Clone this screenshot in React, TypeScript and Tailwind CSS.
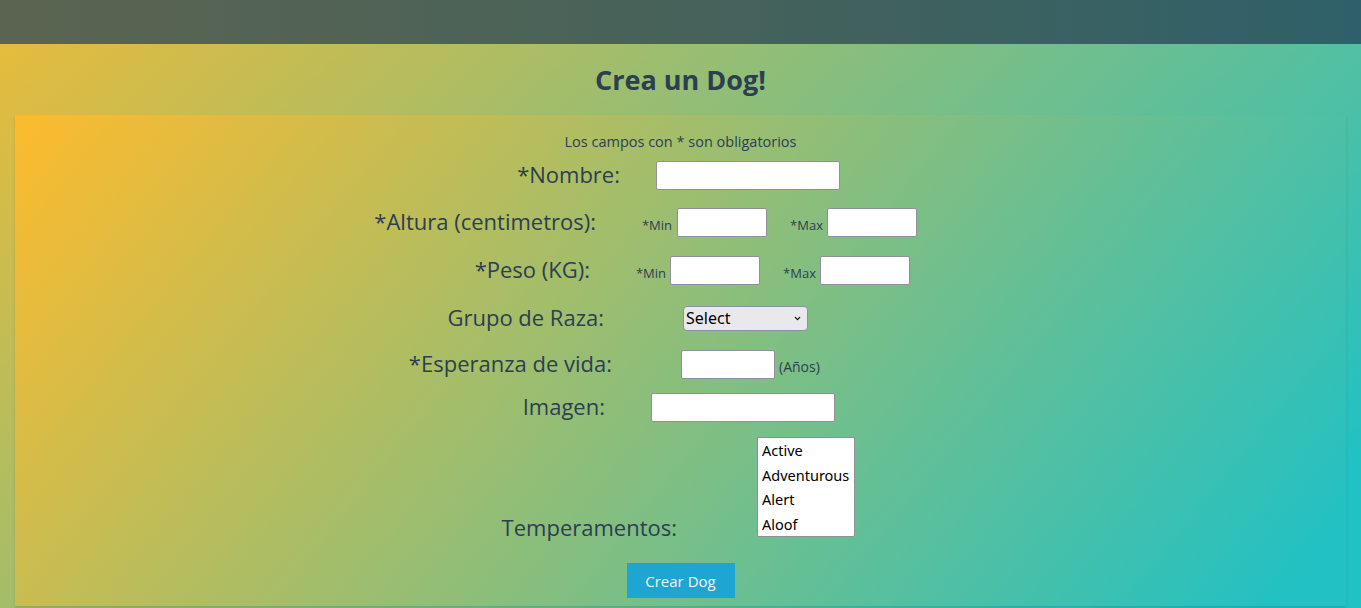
import { ChevronDown } from 'lucide-react';

const temperaments = ['Active', 'Adventurous', 'Alert', 'Aloof'];

const labelCls = 'shrink-0 text-right text-[22px] leading-[30px] pb-[4px] text-[#2c3e50]';
const smallCls = 'shrink-0 text-right text-[13px] leading-[18px] text-[#2c3e50] pt-[4px]';
const inputCls = 'h-[29px] bg-white border border-[#8f8f9d] rounded-[2px] px-1 text-[15px] text-black outline-none';

export default function App() {
  return (
    <div className="min-h-[640px] bg-[linear-gradient(137.5deg,#ebbb39_0%,#22c1c3_90%)] font-['Open_Sans',sans-serif]">
      {/* Navbar */}
      <nav className="h-[44px] bg-[linear-gradient(90deg,#5b6450_0%,#47625a_50%,#2f6069_100%)]"></nav>

      <div className="h-[71px] flex items-center justify-center">
        <h1 className="text-[27px] font-bold text-[#2c3e50] leading-[36px]">Crea un Dog!</h1>
      </div>

      <form
        className="mx-[15px] h-[491px] pt-[18px] flex flex-col bg-[linear-gradient(129deg,#fdbb2d_0%,#22c1c3_96%)] shadow-[0_2px_3px_rgba(0,0,0,0.12)]"
        onSubmit={(e) => e.preventDefault()}
      >
        <p className="h-[18px] leading-[18px] text-center text-[14.5px] text-[#2c3e50]">
          Los campos con * son obligatorios
        </p>

        {/* Nombre */}
        <div className="mt-[10px] flex items-center h-[29px]">
          <label className={`${labelCls} w-[605px]`}>*Nombre:</label>
          <input className={`${inputCls} ml-[36px] w-[184px]`} />
        </div>

        {/* Altura */}
        <div className="mt-[18px] flex items-center h-[29px]">
          <label className={`${labelCls} w-[581px]`}>*Altura (centimetros):</label>
          <span className={`${smallCls} w-[76px]`}>*Min</span>
          <input className={`${inputCls} ml-[5px] w-[90px]`} />
          <span className={`${smallCls} w-[56px]`}>*Max</span>
          <input className={`${inputCls} ml-[4px] w-[90px]`} />
        </div>

        {/* Peso */}
        <div className="mt-[19px] flex items-center h-[29px]">
          <label className={`${labelCls} w-[575px]`}>*Peso (KG):</label>
          <span className={`${smallCls} w-[76px]`}>*Min</span>
          <input className={`${inputCls} ml-[4px] w-[90px]`} />
          <span className={`${smallCls} w-[56px]`}>*Max</span>
          <input className={`${inputCls} ml-[4px] w-[90px]`} />
        </div>

        {/* Grupo de raza */}
        <div className="mt-[21px] flex items-center h-[25px]">
          <label className={`${labelCls} w-[589px]`}>Grupo de Raza:</label>
          <div className="relative ml-[79px]">
            <select className="appearance-none w-[125px] h-[25px] bg-[#e9e9ed] border border-[#8f8f9d] rounded-[4px] pl-[2px] text-[16px] leading-[23px] text-black font-['Noto_Sans',sans-serif] outline-none">
              <option>Select</option>
            </select>
            <ChevronDown className="absolute right-[6px] top-[8px] w-[9px] h-[9px] text-black pointer-events-none" strokeWidth={3} />
          </div>
        </div>

        {/* Esperanza de vida */}
        <div className="mt-[19px] flex items-center h-[29px]">
          <label className={`${labelCls} w-[597px]`}>*Esperanza de vida:</label>
          <input className={`${inputCls} ml-[69px] w-[94px]`} />
          <span className="ml-[4px] pt-[4px] text-[14px] text-[#2c3e50]">(Años)</span>
        </div>

        {/* Imagen */}
        <div className="mt-[14px] flex items-center h-[29px]">
          <label className={`${labelCls} w-[590px]`}>Imagen:</label>
          <input className={`${inputCls} ml-[46px] w-[184px]`} />
        </div>

        {/* Temperamentos */}
        <div className="mt-[15px] flex items-end h-[100px]">
          <label className={`${labelCls} w-[662px] mb-[-9px]`}>Temperamentos:</label>
          <div
            role="listbox"
            className="ml-[80px] w-[98px] h-[100px] bg-white border border-[#8f8f9d] rounded-[2px] pl-[4px] overflow-hidden font-['Noto_Sans',sans-serif]"
          >
            {temperaments.map((t) => (
              <div key={t} role="option" className="h-[24.5px] leading-[24.5px] text-[14.5px] text-black">
                {t}
              </div>
            ))}
          </div>
        </div>

        <button
          type="submit"
          className="mt-[26px] mx-auto w-[108px] h-[35px] pt-[2px] bg-[#1ea5d1] text-[15px] text-[#eef7fb]"
        >
          Crear Dog
        </button>
      </form>
    </div>
  );
}
